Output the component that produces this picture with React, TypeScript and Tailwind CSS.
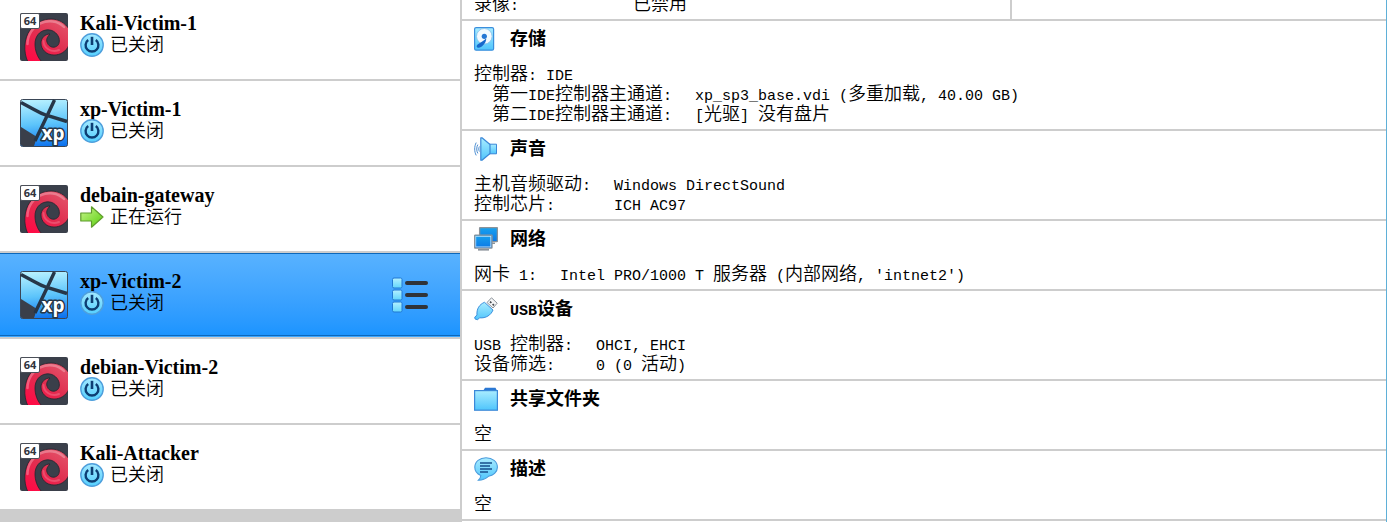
import React, { useState } from "react";

/* Latin runs are half-width cells (9px), CJK runs are full-width cells (18px). */
function Text({ children }: { children: string }) {
  const runs = children.match(/[\x20-\x7e]+|[^\x20-\x7e]+/g) ?? [];
  return (
    <>
      {runs.map((run, i) =>
        /^[\x20-\x7e]/.test(run) ? (
          <span key={i} className="font-['Liberation_Mono',monospace] text-[15px] whitespace-pre">
            {run}
          </span>
        ) : (
          <span key={i}>{run}</span>
        ),
      )}
    </>
  );
}

function DebianIcon() {
  return (
    <svg viewBox="0 0 48 48" className="size-12 shrink-0" aria-hidden="true">
      <defs>
        <linearGradient id="swirl" x1="0.9" y1="0" x2="0.2" y2="1">
          <stop offset="0" stopColor="#e4566c" />
          <stop offset="0.5" stopColor="#e02f50" />
          <stop offset="1" stopColor="#ff0a45" />
        </linearGradient>
        <clipPath id="tile">
          <rect width="48" height="48" rx="2" />
        </clipPath>
      </defs>
      <g clipPath="url(#tile)">
        <rect width="48" height="48" fill="#3a3f4a" />
        <path
          d="M8 49C3 39 4 25 10 17C16 9 24 6 31 6C39 6 45 10 49 16V32C46 39 40 42 34 42C26 42 21 36 21 30C21 25 25 21 30 21C27 24 26 27 27 29C28 33 32 35 35 34C39 33 40 29 39 25C37 19 31 16 26 17C19 18 15 24 15 31C15 37 17 44 22 49Z"
          fill="url(#swirl)"
          stroke="#23262e"
          strokeWidth="0.8"
        />
        <path
          d="M7.5 31C7.5 22 13 14 20 10.5C28 7 38 7.5 44 14"
          fill="none"
          stroke="#fff"
          strokeOpacity="0.28"
          strokeWidth="2.5"
          strokeLinecap="round"
        />
        <path
          d="M23.5 28C23.5 35 31 40 39 37"
          fill="none"
          stroke="#fff"
          strokeOpacity="0.18"
          strokeWidth="2"
          strokeLinecap="round"
        />
      </g>
      <rect x="0.5" y="0.5" width="19" height="15" rx="1.5" fill="#fff" stroke="#4b4f58" />
      <text
        x="10"
        y="12"
        textAnchor="middle"
        fontFamily="Open Sans, sans-serif"
        fontSize="11"
        fontWeight="700"
        fill="#30343d"
      >
        64
      </text>
    </svg>
  );
}

function XpIcon() {
  return (
    <svg viewBox="0 0 48 48" className="size-12 shrink-0" aria-hidden="true">
      <defs>
        <linearGradient id="sky" x1="0.6" y1="0" x2="0.7" y2="1">
          <stop offset="0" stopColor="#b4efff" />
          <stop offset="0.5" stopColor="#5cc4fb" />
          <stop offset="1" stopColor="#0b71ee" />
        </linearGradient>
      </defs>
      <rect x="0.5" y="0.5" width="47" height="47" rx="2" fill="url(#sky)" stroke="#3a4656" />
      <path d="M1 28L17 38L14 47H2.5L1 46Z" fill="#3a3f4a" />
      <path
        d="M1 3.5L14 10.5Q21 14.5 27 16.5L47 22.5M34.5 1L27 17L15 42"
        fill="none"
        stroke="#263648"
        strokeWidth="3.4"
      />
      <text
        x="33"
        y="41"
        textAnchor="middle"
        fontFamily="Open Sans, sans-serif"
        fontSize="19"
        fontWeight="700"
        fill="#fff"
        stroke="#263648"
        strokeWidth="3"
        strokeLinejoin="round"
        paintOrder="stroke"
      >
        xp
      </text>
    </svg>
  );
}

function PowerIcon() {
  return (
    <svg viewBox="0 0 24 24" className="size-6 shrink-0" aria-hidden="true">
      <defs>
        <linearGradient id="power" x1="0" y1="0" x2="0" y2="1">
          <stop offset="0" stopColor="#a4e9ff" />
          <stop offset="1" stopColor="#54d0ff" />
        </linearGradient>
      </defs>
      <circle cx="12" cy="12" r="11.2" fill="url(#power)" stroke="#4f9fdc" strokeWidth="1.4" />
      <path d="M8.2 7A6.4 6.4 0 1 0 15.8 7" fill="none" stroke="#0d3e73" strokeWidth="2.4" />
      <path d="M12 3.8V12" stroke="#0d3e73" strokeWidth="2.6" />
    </svg>
  );
}

function RunningIcon() {
  return (
    <svg viewBox="0 0 24 24" className="size-6 shrink-0" aria-hidden="true">
      <defs>
        <linearGradient id="run" x1="0" y1="0" x2="1" y2="1">
          <stop offset="0" stopColor="#c9f58c" />
          <stop offset="1" stopColor="#58cf0c" />
        </linearGradient>
      </defs>
      <path
        d="M0.8 8H11.5V1.8L23 12L11.5 22.2V16H0.8Z"
        fill="url(#run)"
        stroke="#5f9c2c"
        strokeWidth="1.2"
        strokeLinejoin="round"
      />
    </svg>
  );
}

function MenuIcon() {
  return (
    <svg viewBox="0 0 38 36" className="h-9 w-[38px]" aria-hidden="true">
      <defs>
        <linearGradient id="cell" x1="0" y1="0" x2="0" y2="1">
          <stop offset="0" stopColor="#b4f0ff" />
          <stop offset="1" stopColor="#62d6fc" />
        </linearGradient>
      </defs>
      {[0, 12, 24].map((y) => (
        <g key={y}>
          <rect x="1.5" y={y + 1} width="9.5" height="10" rx="1.5" fill="url(#cell)" stroke="#2279d2" />
          <rect x="14" y={y + 4} width="23" height="4" rx="2" fill="#303338" />
        </g>
      ))}
    </svg>
  );
}

function BlueGradient({ id }: { id: string }) {
  return (
    <defs>
      <linearGradient id={id} x1="0" y1="0" x2="0" y2="1">
        <stop offset="0" stopColor="#a9ecff" />
        <stop offset="1" stopColor="#4fc5fc" />
      </linearGradient>
    </defs>
  );
}

function StorageIcon() {
  return (
    <svg viewBox="0 0 24 24" className="size-6" aria-hidden="true">
      <BlueGradient id="disk" />
      <rect x="0.6" y="0.6" width="19" height="22.6" rx="1.5" fill="url(#disk)" stroke="#3b8fdd" strokeWidth="1.2" />
      <circle cx="10.3" cy="9.3" r="7.8" fill="#f3faff" stroke="#86bfe8" strokeWidth="0.8" />
      <circle cx="10.3" cy="9.3" r="2.6" fill="#2577d4" />
      <path d="M12.2 11.5C12.5 15 9 19.8 5 20.8C2.4 21.2 2 18.8 3.6 17.4L9 14Z" fill="#1769cc" />
    </svg>
  );
}

function SoundIcon() {
  return (
    <svg viewBox="0 0 24 24" className="size-6" aria-hidden="true">
      <BlueGradient id="horn" />
      <path d="M14.5 7.2H22.5V16.8H14.5Z" fill="url(#horn)" stroke="#3b88d8" />
      <path
        d="M6.8 0.8H8L16 7.5V16.5L8 23.2H6.8Z"
        fill="url(#horn)"
        stroke="#3b88d8"
        strokeWidth="1.2"
        strokeLinejoin="round"
      />
      <path
        d="M5.4 9.5C4.6 11 4.6 13 5.4 14.5M3.8 7.6C2.4 10 2.4 14 3.8 16.4M2.2 5.6C0.2 9.5 0.2 14.5 2.2 18.4"
        fill="none"
        stroke="#4a8cd0"
      />
    </svg>
  );
}

function NetworkIcon() {
  return (
    <svg viewBox="0 0 24 24" className="size-6" aria-hidden="true">
      <defs>
        <linearGradient id="screen" x1="0" y1="0" x2="0" y2="1">
          <stop offset="0" stopColor="#17a2ee" />
          <stop offset="1" stopColor="#0c78e6" />
        </linearGradient>
      </defs>
      <rect x="5.6" y="0.6" width="17.8" height="14" rx="0.6" fill="url(#screen)" stroke="#8b9299" strokeWidth="1.3" />
      <path d="M18 15.5H21V17H17Z" fill="#8b9299" />
      <rect x="0.6" y="8.1" width="17.4" height="13" rx="0.6" fill="url(#screen)" stroke="#8b9299" strokeWidth="1.3" />
      <rect x="1.8" y="9.3" width="15" height="10.6" fill="none" stroke="#d5ecfb" strokeWidth="0.7" />
      <path d="M4 21.8H15V23.6H4Z" fill="#8b9299" />
    </svg>
  );
}

function UsbIcon() {
  return (
    <svg viewBox="0 0 24 24" className="size-6" aria-hidden="true">
      <BlueGradient id="plug" />
      <path d="M13 5.5L17.5 0.8L23.2 6.2L19 11Z" fill="#f4f5f6" stroke="#8b9299" />
      <path d="M16 4.6L17.4 5.9M18.6 7.1L20 8.4" stroke="#41464d" strokeWidth="1.6" />
      <path
        d="M10.5 5.3L19 13C17 18 12 21.5 5.5 20.8L3.6 22.8L1 21.9L0.8 20L3 18.2C2.4 12 5.4 7.4 10.5 5.3Z"
        fill="url(#plug)"
        stroke="#3b8fdd"
        strokeLinejoin="round"
      />
    </svg>
  );
}

function FolderIcon() {
  return (
    <svg viewBox="0 0 24 24" className="size-6" aria-hidden="true">
      <BlueGradient id="folder" />
      <path d="M9 4L11 0.8H21.5L23.2 4Z" fill="#2b78d4" />
      <rect x="0.6" y="3.6" width="22.8" height="19.6" fill="url(#folder)" stroke="#3b88d8" strokeWidth="1.2" />
    </svg>
  );
}

function DescriptionIcon() {
  return (
    <svg viewBox="0 0 24 24" className="size-6" aria-hidden="true">
      <BlueGradient id="bubble" />
      <path
        d="M12 0.7C18.4 0.7 23.4 4.6 23.4 10.2C23.4 15.4 19 18.6 14.5 19.3C11.5 21.8 8 23.3 4.4 23.2C6 21.6 6.8 20 6.8 18.4C3 16.8 0.8 13.8 0.8 10.2C0.8 4.6 5.8 0.7 12 0.7Z"
        fill="url(#bubble)"
        stroke="#4a9bdc"
        strokeWidth="1.1"
      />
      <path d="M6 6H18M6 9H16M6 12H18M6 15H14" stroke="#174f8c" strokeWidth="1.7" />
    </svg>
  );
}

type Machine = { name: string; os: "debian" | "xp"; running?: boolean };

const machines: Machine[] = [
  { name: "Kali-Victim-1", os: "debian" },
  { name: "xp-Victim-1", os: "xp" },
  { name: "debain-gateway", os: "debian", running: true },
  { name: "xp-Victim-2", os: "xp" },
  { name: "debian-Victim-2", os: "debian" },
  { name: "Kali-Attacker", os: "debian" },
];

function MachineRow({
  machine,
  selected,
  onSelect,
}: {
  machine: Machine;
  selected: boolean;
  onSelect: () => void;
}) {
  return (
    <li
      className={
        selected
          ? "flex h-[84px] items-center border-t border-b border-t-[#0c68bb] border-b-[#3aa5ff] bg-linear-to-b from-[#58b2ff] to-[#1a94ff] shadow-[inset_0_-1px_0_#0c68bb]"
          : "flex h-[84px] items-center border-y border-white bg-white"
      }
    >
      <button type="button" onClick={onSelect} className="flex flex-1 items-start gap-3 pl-5 text-left">
        {machine.os === "xp" ? <XpIcon /> : <DebianIcon />}
        <span className="flex flex-col">
          <span className="h-5 font-['Liberation_Serif',serif] text-[20px] leading-5 font-bold">{machine.name}</span>
          <span className="flex h-6 items-start gap-[6px]">
            {machine.running ? <RunningIcon /> : <PowerIcon />}
            <span>{machine.running ? "正在运行" : "已关闭"}</span>
          </span>
        </span>
      </button>
      {selected && (
        <button type="button" aria-label="菜单" className="mr-[31px]">
          <MenuIcon />
        </button>
      )}
    </li>
  );
}

function Section({
  icon,
  title,
  children,
}: {
  icon: React.ReactNode;
  title: string;
  children: React.ReactNode;
}) {
  return (
    <section className="bg-white px-3 pt-[6px] pb-[7px]">
      <h2 className="mb-[11px] flex h-6 items-start gap-3 font-bold">
        {icon}
        <span>
          <Text>{title}</Text>
        </span>
      </h2>
      {children}
    </section>
  );
}

function Details({ rows, indent = false }: { rows: [string, string][]; indent?: boolean }) {
  return (
    <table className={indent ? "ml-[18px]" : ""}>
      <tbody>
        {rows.map(([label, value]) => (
          <tr key={label} className="h-5">
            <th scope="row" className="h-5 p-0 pr-[23px] text-left font-[350] whitespace-nowrap">
              <div className="h-5">
                <Text>{label}</Text>
              </div>
            </th>
            <td className="p-0 whitespace-nowrap">
              <div className="h-5">
                <Text>{value}</Text>
              </div>
            </td>
          </tr>
        ))}
      </tbody>
    </table>
  );
}

export default function App() {
  const [selected, setSelected] = useState(3);
  return (
    <div className="flex h-screen overflow-hidden bg-[#cdcdcd] font-['Noto_Sans_CJK_SC',sans-serif] text-[18px] leading-5 font-[350] text-black">
      <nav className="w-[460px] shrink-0">
        <ul className="-mt-[5px] flex flex-col gap-[2px]">
          {machines.map((m, i) => (
            <MachineRow key={m.name} machine={m} selected={i === selected} onSelect={() => setSelected(i)} />
          ))}
        </ul>
      </nav>
      <main className="ml-[2px] flex min-w-0 flex-1 flex-col gap-[2px] border-r border-[#5fb0d8]">
        <div className="-mt-[8px] flex gap-[2px]">
          <div className="flex w-[548px] bg-white px-3 pb-[7px]">
            <div className="h-5 w-[159px]">
              <Text>录像:</Text>
            </div>
            <div className="h-5">已禁用</div>
          </div>
          <div className="flex-1 bg-white" />
        </div>
        <Section icon={<StorageIcon />} title="存储">
          <p className="h-5">
            <Text>控制器: IDE</Text>
          </p>
          <Details
            indent
            rows={[
              ["第一IDE控制器主通道:", "xp_sp3_base.vdi (多重加载, 40.00 GB)"],
              ["第二IDE控制器主通道:", "[光驱] 没有盘片"],
            ]}
          />
        </Section>
        <Section icon={<SoundIcon />} title="声音">
          <Details
            rows={[
              ["主机音频驱动:", "Windows DirectSound"],
              ["控制芯片:", "ICH AC97"],
            ]}
          />
        </Section>
        <Section icon={<NetworkIcon />} title="网络">
          <Details rows={[["网卡 1:", "Intel PRO/1000 T 服务器 (内部网络, 'intnet2')"]]} />
        </Section>
        <Section icon={<UsbIcon />} title="USB设备">
          <Details
            rows={[
              ["USB 控制器:", "OHCI, EHCI"],
              ["设备筛选:", "0 (0 活动)"],
            ]}
          />
        </Section>
        <Section icon={<FolderIcon />} title="共享文件夹">
          <p className="h-5">空</p>
        </Section>
        <Section icon={<DescriptionIcon />} title="描述">
          <p className="h-5">空</p>
        </Section>
        <div className="flex-1 bg-white" />
      </main>
    </div>
  );
}
